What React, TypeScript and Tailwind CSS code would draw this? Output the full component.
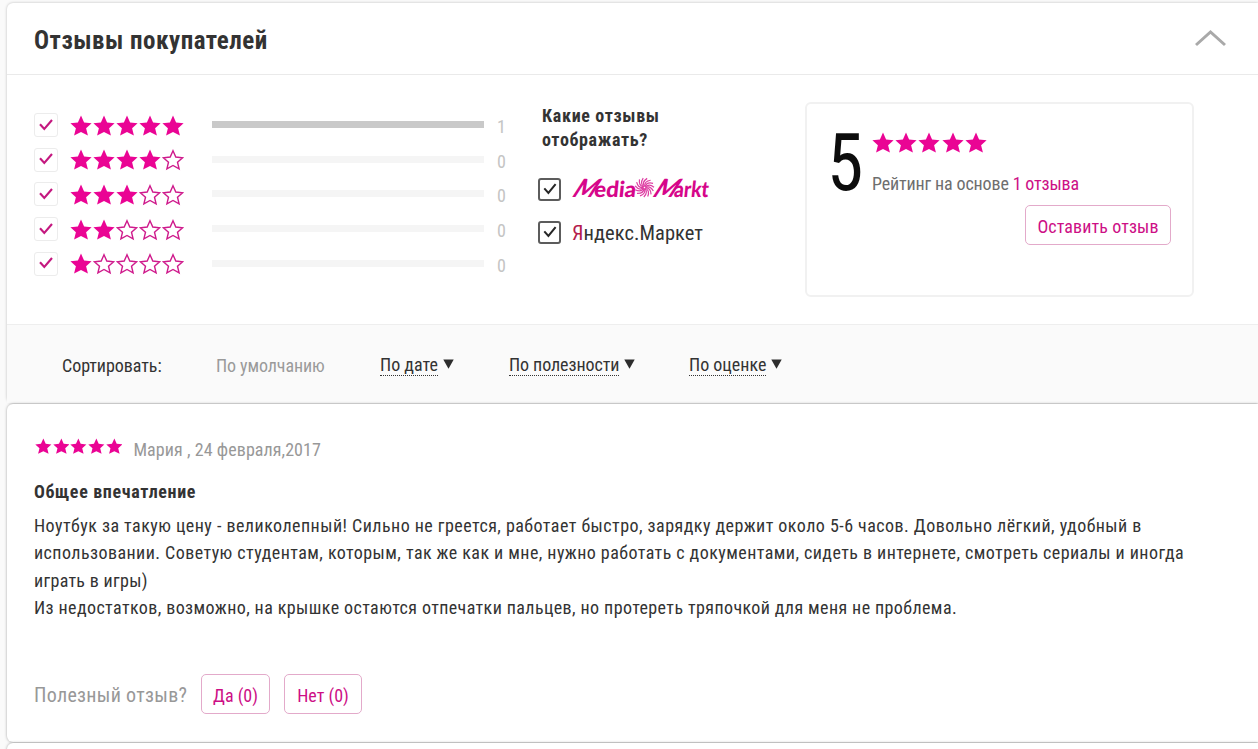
import React from 'react';

const STAR =
  'M11 0.6 L14.1 7.4 L21.6 8.2 L16.1 13.3 L17.9 20.6 L11 17.1 L4.1 20.6 L5.9 13.3 L0.4 8.2 L7.9 7.4 Z';
const STAR_OUTLINE =
  'M11 1.8 L13.8 8 L20.6 8.7 L15.5 13.2 L17.1 19.8 L11 16.5 L4.9 19.8 L6.5 13.2 L1.4 8.7 L8.2 8 Z';

interface StarsProps {
  value: number;
  small?: boolean;
}

const Stars: React.FC<StarsProps> = ({ value, small }) => (
  <div className={small ? 'flex gap-px' : 'flex gap-[1.2px]'}>
    {[1, 2, 3, 4, 5].map((n) => (
      <svg
        key={n}
        viewBox="0 0 22 22"
        className={small ? 'h-[17px] w-[16.7px]' : 'size-[22px]'}
      >
        {n <= value ? (
          <path d={STAR} fill="#ea0494" />
        ) : (
          <path d={STAR_OUTLINE} fill="none" stroke="#cf1a8c" strokeWidth="1.4" />
        )}
      </svg>
    ))}
  </div>
);

const ratings = [
  { stars: 5, count: 1 },
  { stars: 4, count: 0 },
  { stars: 3, count: 0 },
  { stars: 2, count: 0 },
  { stars: 1, count: 0 },
];

const RatingFilter = () => (
  <div className="flex w-[473px] flex-col gap-[10.7px] pt-[38px]">
    {ratings.map(({ stars, count }) => (
      <div key={stars} className="flex h-6 items-center">
        <div className="flex size-6 items-center justify-center rounded-[3px] border border-[#ececec]">
          <svg viewBox="0 0 14 12" className="mb-px h-3 w-3.5">
            <path d="M1 5.2 L5.3 10 L13 1" fill="none" stroke="#c4187f" strokeWidth="2.1" />
          </svg>
        </div>
        <div className="ml-[11.5px] w-[142.5px] pt-px">
          <Stars value={stars} />
        </div>
        <div className={`mb-px h-[7px] w-[272px] ${count ? 'bg-[#c9c9c9]' : 'bg-[#f5f5f5]'}`} />
        <span className="ml-[13px] pt-1 text-[18px] leading-5 text-[#c4c4c4]">{count}</span>
      </div>
    ))}
  </div>
);

const DarkCheckbox = () => (
  <div className="flex size-[23px] shrink-0 items-center justify-center rounded-[3px] border-2 border-[#5c5c5c]">
    <svg viewBox="0 0 14 12" className="h-3 w-3.5">
      <path d="M1.3 5.4 L5.4 10 L12.6 1.2" fill="none" stroke="#262626" strokeWidth="2" />
    </svg>
  </div>
);

const MediaMarktLogo = () => (
  <svg
    viewBox="0 -8 145 40"
    className="h-10 w-[145px] shrink-0 overflow-visible [font-stretch:100%]"
    fill="#d6068a"
    fontFamily="Lato, 'Liberation Sans', sans-serif"
    fontWeight="900"
  >
    <text transform="translate(-0.5 19.5) skewX(-33)" fontSize="25" textLength="22" lengthAdjust="spacingAndGlyphs">M</text>
    <text transform="translate(22.5 19.5) skewX(-6)" fontSize="22" textLength="42" lengthAdjust="spacingAndGlyphs">edia</text>
    <text transform="translate(80 19.5) skewX(-33)" fontSize="25" textLength="22" lengthAdjust="spacingAndGlyphs">M</text>
    <text transform="translate(102.5 19.5) skewX(-6)" fontSize="22" textLength="34.5" lengthAdjust="spacingAndGlyphs">arkt</text>
    {/* spiral */}
    <g transform="translate(73.5 10.5)" fill="none" stroke="#de3fa3" strokeWidth="1.2">
      {[0, 24, 48, 72, 96, 120, 144, 168, 192, 216, 240, 264, 288, 312, 336].map((a) => (
        <path key={a} d="M1 0 C4 -1.5 7 0 8.8 3.6" transform={`rotate(${a})`} />
      ))}
    </g>
  </svg>
);

const Sources = () => (
  <div className="w-[267px] pt-[29px]">
    <h3 className="pl-1 text-[18px] leading-6 font-bold tracking-[0.65px]">
      Какие отзывы
      <br />
      отображать?
    </h3>
    <div className="mt-[23px] flex h-7 items-center gap-2.5">
      <DarkCheckbox />
      <MediaMarktLogo />
    </div>
    <div className="mt-[15px] flex h-7 items-center gap-[11px]">
      <DarkCheckbox />
      <span className="pt-[3px] text-[20.5px] tracking-[0.05px]">
        <span className="text-[#b51c4c]">Я</span>ндекс.Маркет
      </span>
    </div>
  </div>
);

const PinkButton = ({ className, children }: { className: string; children: React.ReactNode }) => (
  <button
    className={`flex h-10 items-center justify-center rounded-[5px] border border-[#e3aaca] bg-white pt-[3px] whitespace-nowrap text-[#cd0f86] ${className}`}
  >
    {children}
  </button>
);

const Summary = () => (
  <div className="mt-[27px] h-[195px] w-[389px] rounded-md border-2 border-[#f1f1f1]">
    <div className="flex pt-7 pl-5">
      <span className="w-[45px] origin-left scale-x-[0.92] text-[80px] leading-[63px] text-[#0c0c0c]">5</span>
      <div>
        <Stars value={5} />
        <p className="mt-[18px] text-[18px] leading-6 tracking-[-0.15px] whitespace-nowrap text-[#6e6e6e]">
          Рейтинг на основе <span className="text-[#cd0f86]">1 отзыва</span>
        </p>
      </div>
    </div>
    <div className="mt-[9px] flex justify-end pr-[21px]">
      <PinkButton className="w-[146px] text-[18px] tracking-[0.1px]">Оставить отзыв</PinkButton>
    </div>
  </div>
);

const SortLink = ({ className, children }: { className: string; children: React.ReactNode }) => (
  <div className={`flex items-center gap-[5px] ${className}`}>
    <span className="border-b border-dotted border-[#333] leading-5">{children}</span>
    <svg viewBox="0 0 11 10" className="mb-[3px] h-2.5 w-[11px]">
      <path d="M0.3 0.5 H10.7 L5.5 9.7 Z" fill="#2d2d2d" />
    </svg>
  </div>
);

const SortBar = () => (
  <div className="flex h-[79px] items-center border-t border-[#eee] bg-[#fafafa] pt-0.5 pl-[55px] text-[18px] whitespace-nowrap">
    <span className="w-[154px] tracking-[-0.05px]">Сортировать:</span>
    <span className="w-[164px] tracking-[-0.1px] text-[#9a9a9a]">По умолчанию</span>
    <SortLink className="w-[129px]">По дате</SortLink>
    <SortLink className="w-[180px] tracking-[-0.08px]">По полезности</SortLink>
    <SortLink>По оценке</SortLink>
  </div>
);

const Review = () => (
  <article className="h-[338px] shrink-0 rounded-l-md bg-white pt-[34px] pl-7 shadow-[0_0_3px_rgba(0,0,0,0.35)]">
    <div className="flex gap-[11px]">
      <Stars value={5} small />
      <span className="text-[18px] leading-[23px] tracking-[0.07px] text-[#989898]">Мария , 24 февраля,2017</span>
    </div>
    <div className="-ml-px">
      <h4 className="mt-[19px] text-[18px] leading-6 font-bold tracking-[0.65px]">Общее впечатление</h4>
      <p className="mt-2 text-[18px] leading-[27.4px] tracking-[0.44px] whitespace-nowrap">
        <span className="tracking-[0.46px]">
          Ноутбук за такую цену - великолепный! Сильно не греется, работает быстро, зарядку держит около 5-6 часов. Довольно лёгкий, удобный в
        </span>
        <br />
        использовании. Советую студентам, которым, так же как и мне, нужно работать с документами, сидеть в интернете, смотреть сериалы и иногда
        <br />
        <span className="tracking-[0.3px]">играть в игры)</span>
        <br />
        <span className="tracking-[0.4px]">
          Из недостатков, возможно, на крышке остаются отпечатки пальцев, но протереть тряпочкой для меня не проблема.
        </span>
      </p>
      <div className="mt-[52px] flex items-center">
        <span className="w-[167px] pt-0.5 text-[20px] tracking-[0.3px] text-[#989898]">Полезный отзыв?</span>
        <PinkButton className="w-[69px] text-[18px]">Да (0)</PinkButton>
        <PinkButton className="ml-3.5 w-[78px] text-[18px]">Нет (0)</PinkButton>
      </div>
    </div>
  </article>
);

export default function App() {
  return (
    <div className="flex h-[749px] flex-col gap-px overflow-hidden bg-[#fafafa] pt-[3px] pl-[7px] font-['Roboto','Open_Sans',sans-serif] text-[#333] [font-stretch:75%]">
      <section className="h-[400px] shrink-0 rounded-l-md bg-white shadow-[0_0_3px_rgba(0,0,0,0.25)]">
        <header className="flex h-[72px] items-center justify-between border-b border-[#eaeaea] pr-8 pl-[27px]">
          <h2 className="pt-1 text-[25px] font-bold tracking-[0.5px]">Отзывы покупателей</h2>
          <svg viewBox="0 0 31 18" className="mb-0.5 h-[18px] w-[31px]">
            <path d="M1 16 L15.5 3 L30 16" fill="none" stroke="#a9a9a9" strokeWidth="3" />
          </svg>
        </header>
        <div className="flex h-[249px] pl-[27px]">
          <RatingFilter />
          <div className="w-[31px]" />
          <Sources />
          <Summary />
        </div>
        <SortBar />
      </section>
      <Review />
      <div className="h-10 shrink-0 rounded-l-md bg-white shadow-[0_0_3px_rgba(0,0,0,0.35)]" />
    </div>
  );
}
